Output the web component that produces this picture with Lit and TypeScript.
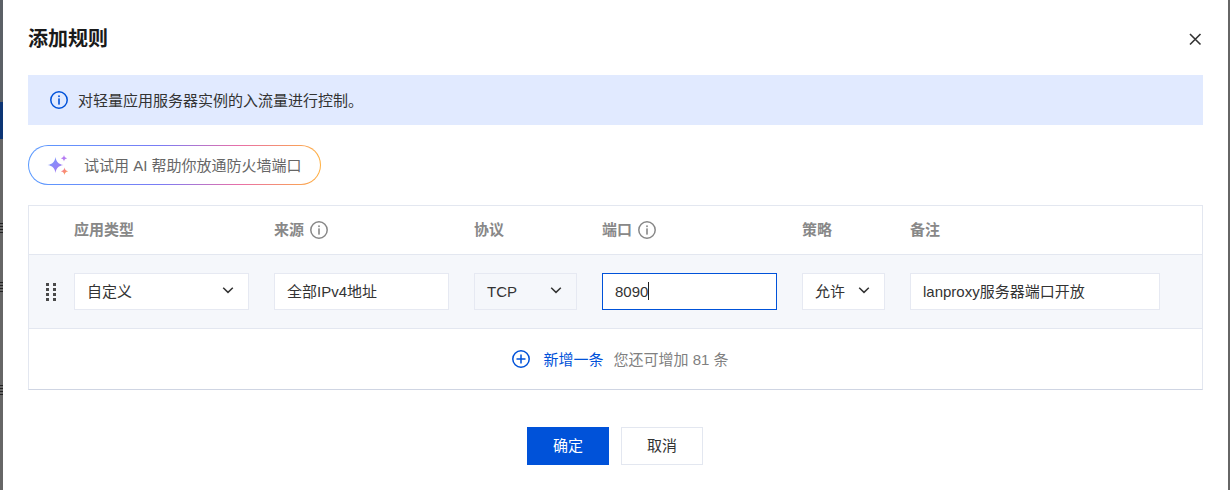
import { LitElement, html, css, svg } from "lit";
import { customElement } from "lit/decorators.js";

const chevron = html`<svg class="chev" width="16" height="16" viewBox="0 0 16 16" fill="none"><path d="M3.200 5.800 8 10.400l4.800-4.600" stroke="#333" stroke-width="1.500"/></svg>`;
const info = (c: string, s = 20) => html`<svg width=${s} height=${s} viewBox="0 0 20 20" fill="none"><circle cx="10" cy="10" r="8.200" stroke=${c} stroke-width="1.500"/><rect x="9.200" y="5.400" width="1.600" height="1.700" fill=${c}/><rect x="9.200" y="8.400" width="1.600" height="6.200" fill=${c}/></svg>`;

@customElement("app-root")
export class AppRoot extends LitElement {
  static styles = css`
    :host { display: block; width: 1230px; height: 490px; overflow: hidden; font-family: "Liberation Sans", "Noto Sans CJK SC", sans-serif; font-size: 15px; color: #333; }
    .page { display: flex; height: 490px; background: #666; }
    .edge-l { width: 3px; position: relative; background: #666; flex: none; }
    .edge-l i { position: absolute; left: 0; width: 3px; }
    .edge-l .navy { top: 102px; height: 37px; background: #0c3574; }
    .edge-l .top { top: 0; height: 102px; background: #5b6066; }
    .edge-l .mark { height: 1px; background: #222; box-shadow: 0 3px 0 #222, 0 6px 0 #222, 0 9px 0 #222; }
    .edge-r { width: 2px; background: #666; flex: none; }
    .modal { flex: 1; min-width: 0; background: #fff; padding: 0 25px; box-sizing: border-box; display: flex; flex-direction: column; }
    .head { height: 75px; display: flex; align-items: center; justify-content: space-between; box-sizing: border-box; padding-top: 3px; }
    h1 { margin: 0; font-size: 20px; line-height: 28px; font-weight: 700; color: #1a1a1a; }
    .close { width: 16px; height: 16px; display: block; }
    .alert { height: 50px; background: #e1eaff; display: flex; align-items: center; gap: 9px; padding-left: 21px; color: #333; line-height: 20px; }
    .alert svg { flex: none; }
    .alert span { padding-top: 2px; }
    .pill { margin-top: 20px; width: 293px; height: 40px; box-sizing: border-box; border: 1px solid transparent; border-radius: 20px;
      background: linear-gradient(#fff, #fff) padding-box, linear-gradient(90deg, #5b9bff 0%, #7a7cf5 45%, #e86fa8 72%, #ffb040 100%) border-box;
      display: flex; align-items: center; padding-left: 17px; gap: 14px; color: #666; }
    .pill span { padding-bottom: 2px; }
    .table { margin-top: 20px; border: 1px solid #e3e7f0; border-bottom-color: #cfd5e3; box-sizing: border-box; height: 185px; display: flex; flex-direction: column; }
    .cols { display: grid; grid-template-columns: 175px 175px 103px 175px 83px 250px; column-gap: 25px; padding-left: 45px; }
    .thead { height: 49px; border-bottom: 1px solid #e3e7f0; align-items: center; color: #888; font-weight: 700; box-sizing: border-box; padding-bottom: 3px; }
    .thead > div { display: flex; align-items: center; gap: 5px; }
    .thead svg { transform: translateY(1px); }
    .row { height: 74px; background: #f5f7fb; border-bottom: 1px solid #e3e7f0; box-sizing: border-box; align-items: center; position: relative; padding-bottom: 1px; }
    .drag { position: absolute; left: 17px; top: 28px; display: grid; grid-template-columns: 3px 3px; gap: 2px 4px; }
    .drag i { width: 3px; height: 3px; background: #4a4a4a; }
    .field { height: 37px; border: 1px solid #e6e9f2; background: #fff; box-sizing: border-box; display: flex; align-items: center; justify-content: space-between; padding: 2px 12px 0; line-height: 20px; color: #333; white-space: nowrap; }
    .field.tcp { background: #f5f7fb; }
    .field.focus { border-color: #0052d9; justify-content: flex-start; }
    .caret { width: 1px; height: 18px; background: #222; transform: translateY(-1px); }
    .chev { flex: none; transform: translateY(-2px); }
    .add { flex: 1; display: flex; align-items: center; justify-content: center; color: #808080; padding: 0 0 2px 9px; }
    .add svg { margin-right: 12px; transform: translateY(1px); }
    .add a { color: #0052d9; margin-right: 10px; }
    .foot { margin-top: 37px; display: flex; gap: 12px; padding-left: 499px; }
    .btn { width: 82px; height: 38px; display: flex; align-items: center; justify-content: center; box-sizing: border-box; line-height: 20px; }
    .primary { background: #0052d9; color: #fff; }
    .ghost { background: #fff; border: 1px solid #e3e7f0; color: #333; }
  `;

  render() {
    const marks = [223, 282, 385].map((t) => html`<i class="mark" style="top:${t}px"></i>`);
    const dots = Array.from({ length: 8 }, () => html`<i></i>`);
    return html`<div class="page">
      <div class="edge-l"><i class="top"></i><i class="navy"></i>${marks}</div>
      <div class="modal">
        <div class="head">
          <h1>添加规则</h1>
          <svg class="close" viewBox="0 0 16 16" fill="none"><path d="M3 3l10.500 10.500M13.500 3 3 13.500" stroke="#333" stroke-width="1.600"/></svg>
        </div>
        <div class="alert">${info("#0052d9")}<span>对轻量应用服务器实例的入流量进行控制。</span></div>
        <div class="pill">
          <svg width="24" height="24" viewBox="0 0 24 24">
            <defs>
              <linearGradient id="sa" x1="0" y1="0" x2="1" y2="1"><stop offset="0" stop-color="#6fa0ff"/><stop offset="1" stop-color="#b070f0"/></linearGradient>
              <linearGradient id="sb" x1="0" y1="0" x2="1" y2="1"><stop offset="0" stop-color="#f06fb0"/><stop offset="1" stop-color="#ffa640"/></linearGradient>
            </defs>
            ${svg`<path d="M9.500 4c.8 5 3 7.200 8 8-5 .8-7.200 3-8 8-.8-5-3-7.200-8-8 5-.8 7.200-3 8-8z" fill="url(#sa)"/>
            <path d="M18 2c.4 2 1.200 2.800 3.200 3.200-2 .4-2.800 1.200-3.200 3.200-.4-2-1.200-2.800-3.200-3.200 2-.4 2.800-1.200 3.200-3.200z" fill="#b57bf2"/>
            <path d="M18.500 14.500c.5 2.400 1.300 3.200 3.700 3.700-2.400.5-3.200 1.300-3.700 3.700-.5-2.400-1.300-3.200-3.700-3.700 2.400-.5 3.200-1.300 3.700-3.700z" fill="url(#sb)"/>`}
          </svg>
          <span>试试用 AI 帮助你放通防火墙端口</span>
        </div>
        <div class="table">
          <div class="cols thead">
            <div>应用类型</div>
            <div>来源${info("#888")}</div>
            <div>协议</div>
            <div>端口${info("#888")}</div>
            <div>策略</div>
            <div>备注</div>
          </div>
          <div class="cols row">
            <div class="drag">${dots}</div>
            <div class="field">自定义${chevron}</div>
            <div class="field">全部IPv4地址</div>
            <div class="field tcp">TCP${chevron}</div>
            <div class="field focus">8090<span class="caret"></span></div>
            <div class="field">允许${chevron}</div>
            <div class="field">lanproxy服务器端口开放</div>
          </div>
          <div class="add">
            <svg width="20" height="20" viewBox="0 0 20 20" fill="none"><circle cx="10" cy="10" r="8.200" stroke="#0052d9" stroke-width="1.500"/><path d="M5.500 10h9M10 5.500v9" stroke="#0052d9" stroke-width="1.500"/></svg>
            <a>新增一条</a><span>您还可增加 81 条</span>
          </div>
        </div>
        <div class="foot">
          <div class="btn primary">确定</div>
          <div class="btn ghost">取消</div>
        </div>
      </div>
      <div class="edge-r"></div>
    </div>`;
  }
}
